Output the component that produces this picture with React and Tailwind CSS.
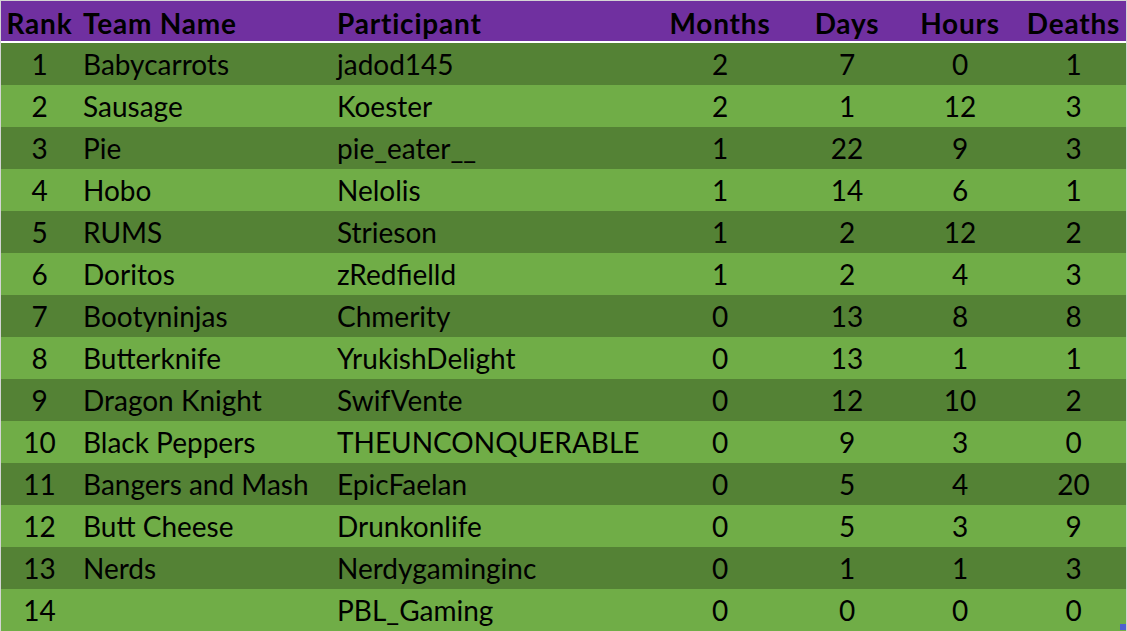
import React from "react";

const rows = [
  [1, "Babycarrots", "jadod145", 2, 7, 0, 1],
  [2, "Sausage", "Koester", 2, 1, 12, 3],
  [3, "Pie", "pie_eater__", 1, 22, 9, 3],
  [4, "Hobo", "Nelolis", 1, 14, 6, 1],
  [5, "RUMS", "Strieson", 1, 2, 12, 2],
  [6, "Doritos", "zRedfielld", 1, 2, 4, 3],
  [7, "Bootyninjas", "Chmerity", 0, 13, 8, 8],
  [8, "Butterknife", "YrukishDelight", 0, 13, 1, 1],
  [9, "Dragon Knight", "SwifVente", 0, 12, 10, 2],
  [10, "Black Peppers", "THEUNCONQUERABLE", 0, 9, 3, 0],
  [11, "Bangers and Mash", "EpicFaelan", 0, 5, 4, 20],
  [12, "Butt Cheese", "Drunkonlife", 0, 5, 3, 9],
  [13, "Nerds", "Nerdygaminginc", 0, 1, 1, 3],
  [14, "", "PBL_Gaming", 0, 0, 0, 0],
];

const cols = "grid grid-cols-[77px_254px_328px_120px_134px_92px_120px]";

export default function App() {
  return (
    <div
      className="w-[1127px] h-[631px] overflow-hidden bg-white border-t border-l border-r border-[#d4d4d4] relative text-black"
      style={{ fontFamily: "Lato, 'Noto Sans', sans-serif" }}
    >
      <div className={`${cols} h-[40px] pt-[3px] bg-[#7030a0] items-center font-bold text-[28px] tracking-[0.8px] leading-none`}>
        <div className="text-center">Rank</div>
        <div className="pl-[5px] whitespace-nowrap">Team Name</div>
        <div className="pl-[5px]">Participant</div>
        <div className="text-center">Months</div>
        <div className="text-center">Days</div>
        <div className="text-center">Hours</div>
        <div className="text-center pl-[15px]">Deaths</div>
      </div>
      <div className="h-[2px] bg-white" />
      {rows.map((r, i) => (
        <div
          key={r[0]}
          className={`${cols} h-[42px] items-center text-[28px] leading-none ${
            i % 2 === 0 ? "bg-[#548235]" : "bg-[#70ad47]"
          }`}
        >
          <div className="text-center">{r[0]}</div>
          <div className="pl-[5px] whitespace-nowrap">{r[1]}</div>
          <div className="pl-[5px] whitespace-nowrap">{r[2]}</div>
          <div className="text-center">{r[3]}</div>
          <div className="text-center">{r[4]}</div>
          <div className="text-center">{r[5]}</div>
          <div className="text-center pl-[15px]">{r[6]}</div>
        </div>
      ))}
      <div className="absolute right-0 bottom-[1px] w-[6px] h-[6px] bg-[#4f5fd0]" />
    </div>
  );
}
